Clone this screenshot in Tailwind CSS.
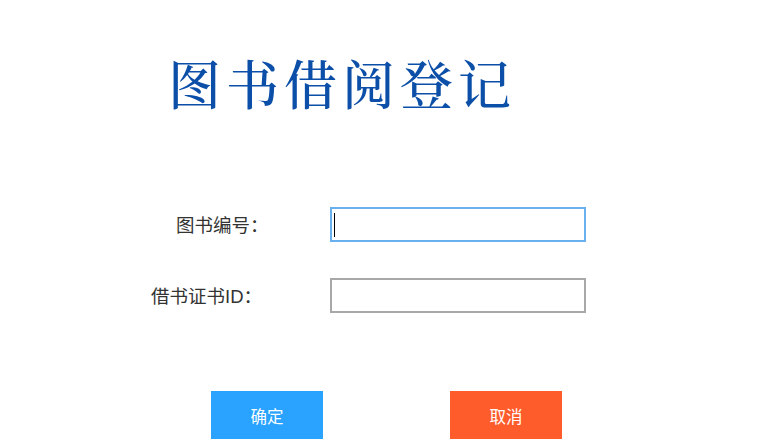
<!DOCTYPE html>
<html lang="zh-CN">
<head>
    <meta charset="UTF-8">
    <meta name="viewport" content="width=device-width, initial-scale=1.0">
    <title>图书借阅登记</title>
    <script src="https://cdn.jsdelivr.net/npm/@tailwindcss/browser@4"></script>
</head>
<body class="bg-white h-[448px] overflow-hidden font-['Liberation_Sans','Noto_Sans_CJK_SC',sans-serif]">
    <!-- Title -->
    <h1 class="pt-[44px] pl-[168px] h-[207px] text-[53px] leading-[76px] tracking-[5px] font-medium text-[#0b4fa8] font-['Noto_Serif_CJK_SC','Noto_Sans_CJK_SC',serif]">图书借阅登记</h1>

    <!-- Form rows -->
    <div class="flex flex-col gap-[36px] pl-[151px]">
        <div class="flex items-center h-[35px]">
            <label class="w-[179px] pl-[25px] pt-[2px] text-[18.5px] text-[#333333]">图书编号：</label>
            <div class="w-[256px] h-[35px] border-2 border-[#69b0ee] flex items-center pl-[2px]">
                <span class="w-px h-[24px] bg-black"></span>
            </div>
        </div>
        <div class="flex items-center h-[35px]">
            <label class="w-[179px] pt-[2px] text-[18.5px] text-[#333333]">借书证书ID：</label>
            <input type="text" class="w-[256px] h-[35px] border-2 border-[#a8a8a8] bg-white">
        </div>
    </div>

    <!-- Buttons -->
    <div class="flex gap-[127px] pl-[211px] mt-[78px]">
        <button class="w-[112px] h-[48px] pt-[4px] bg-[#29a3ff] text-white text-[16.5px]">确定</button>
        <button class="w-[112px] h-[48px] pt-[4px] bg-[#ff5c2b] text-white text-[16.5px]">取消</button>
    </div>
</body>
</html>
